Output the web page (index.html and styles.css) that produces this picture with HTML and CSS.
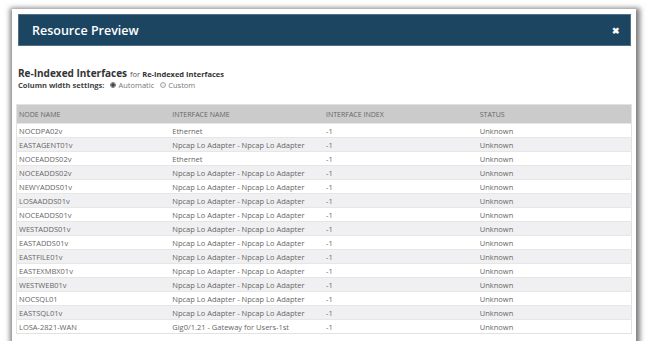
FILE: index.html
```html
<!DOCTYPE html>
<html>
<head>
<meta charset="utf-8">
<link rel="stylesheet" href="styles.css">
</head>
<body>
<div class="dialog">
  <div class="header">
    <span class="title">Resource Preview</span>
    <span class="close">&#x2716;</span>
  </div>
  <div class="content">
    <div class="heading"><b class="big">Re-Indexed Interfaces</b><span class="for">for</span><b class="small">Re-Indexed Interfaces</b></div>
    <div class="settings">
      <b>Column width settings:</b>
      <span class="radio on"></span><span class="opt">Automatic</span>
      <span class="radio"></span><span class="opt">Custom</span>
    </div>
    <table class="grid">
      <thead>
        <tr><th>NODE NAME</th><th>INTERFACE NAME</th><th>INTERFACE INDEX</th><th>STATUS</th></tr>
      </thead>
      <tbody>
        <tr><td>NOCDPA02v</td><td>Ethernet</td><td>-1</td><td>Unknown</td></tr>
        <tr><td>EASTAGENT01v</td><td>Npcap Lo Adapter - Npcap Lo Adapter</td><td>-1</td><td>Unknown</td></tr>
        <tr><td>NOCEADDS02v</td><td>Ethernet</td><td>-1</td><td>Unknown</td></tr>
        <tr><td>NOCEADDS02v</td><td>Npcap Lo Adapter - Npcap Lo Adapter</td><td>-1</td><td>Unknown</td></tr>
        <tr><td>NEWYADDS01v</td><td>Npcap Lo Adapter - Npcap Lo Adapter</td><td>-1</td><td>Unknown</td></tr>
        <tr><td>LOSAADDS01v</td><td>Npcap Lo Adapter - Npcap Lo Adapter</td><td>-1</td><td>Unknown</td></tr>
        <tr><td>NOCEADDS01v</td><td>Npcap Lo Adapter - Npcap Lo Adapter</td><td>-1</td><td>Unknown</td></tr>
        <tr><td>WESTADDS01v</td><td>Npcap Lo Adapter - Npcap Lo Adapter</td><td>-1</td><td>Unknown</td></tr>
        <tr><td>EASTADDS01v</td><td>Npcap Lo Adapter - Npcap Lo Adapter</td><td>-1</td><td>Unknown</td></tr>
        <tr><td>EASTFILE01v</td><td>Npcap Lo Adapter - Npcap Lo Adapter</td><td>-1</td><td>Unknown</td></tr>
        <tr><td>EASTEXMBX01v</td><td>Npcap Lo Adapter - Npcap Lo Adapter</td><td>-1</td><td>Unknown</td></tr>
        <tr><td>WESTWEB01v</td><td>Npcap Lo Adapter - Npcap Lo Adapter</td><td>-1</td><td>Unknown</td></tr>
        <tr><td>NOCSQL01</td><td>Npcap Lo Adapter - Npcap Lo Adapter</td><td>-1</td><td>Unknown</td></tr>
        <tr><td>EASTSQL01v</td><td>Npcap Lo Adapter - Npcap Lo Adapter</td><td>-1</td><td>Unknown</td></tr>
        <tr><td>LOSA-2821-WAN</td><td>Gig0/1.21 - Gateway for Users-1st</td><td>-1</td><td>Unknown</td></tr>
      </tbody>
    </table>
  </div>
</div>
</body>
</html>
```

FILE: styles.css
```css
html, body {
  margin: 0;
  padding: 0;
  background: #ffffff;
}
body {
  padding: 9px 0 0 12px;
  font-family: "Open Sans", "Noto Sans", sans-serif;
}
.dialog {
  width: 624px;
  height: 332px;
  box-sizing: border-box;
  background: #ffffff;
  padding: 5px 5px 0 6px;
  box-shadow: 1px 2px 5px 3px rgba(0, 0, 0, 0.5);
}
.header {
  height: 32px;
  background: #1c4562;
  border: 1px solid #52708a;
  box-sizing: border-box;
  display: flex;
  align-items: center;
  justify-content: space-between;
  padding: 0 10px 0 13px;
  color: #ffffff;
}
.title {
  font-size: 12.5px;
  font-weight: 600;
}
.close {
  font-size: 9px;
  font-weight: 700;
}
.content {
  padding: 19px 0 0 0;
}
.heading {
  color: #333;
  line-height: 12px;
  white-space: nowrap;
}
.heading .big {
  font-size: 10px;
  font-weight: 700;
}
.heading .for {
  font-size: 7.5px;
  color: #555;
  margin: 0 2px 0 3px;
}
.heading .small {
  font-size: 7.5px;
  font-weight: 700;
}
.settings {
  font-size: 7.5px;
  color: #444;
  line-height: 10px;
  display: flex;
  align-items: center;
  white-space: nowrap;
}
.settings b {
  margin-right: 6px;
}
.radio {
  width: 6px;
  height: 6px;
  border-radius: 50%;
  border: 1px solid #aaa;
  background: #eee;
  box-sizing: border-box;
  margin-right: 2px;
}
.radio.on {
  border-color: #777;
  background: radial-gradient(circle, #444 0 1.5px, #eee 2px);
}
.opt {
  color: #777;
  margin-right: 6px;
}
.grid {
  margin-top: 14px;
  margin-left: -2px;
  width: 616px;
  border-collapse: collapse;
  table-layout: fixed;
  border: 1px solid #e2e2e2;
  font-size: 7.5px;
  color: #666;
}
.grid th {
  background: #cbcbcb;
  font-weight: 400;
  text-align: left;
  height: 18px;
  padding: 0 0 0 2px;
  font-size: 7px;
  color: #666;
}
.grid td {
  height: 14px;
  padding: 0 0 0 2px;
  border-top: 1px solid #e6e6e6;
  box-sizing: border-box;
  white-space: nowrap;
}
.grid tbody tr:nth-child(even) td {
  background: #f0f0f2;
}
```
